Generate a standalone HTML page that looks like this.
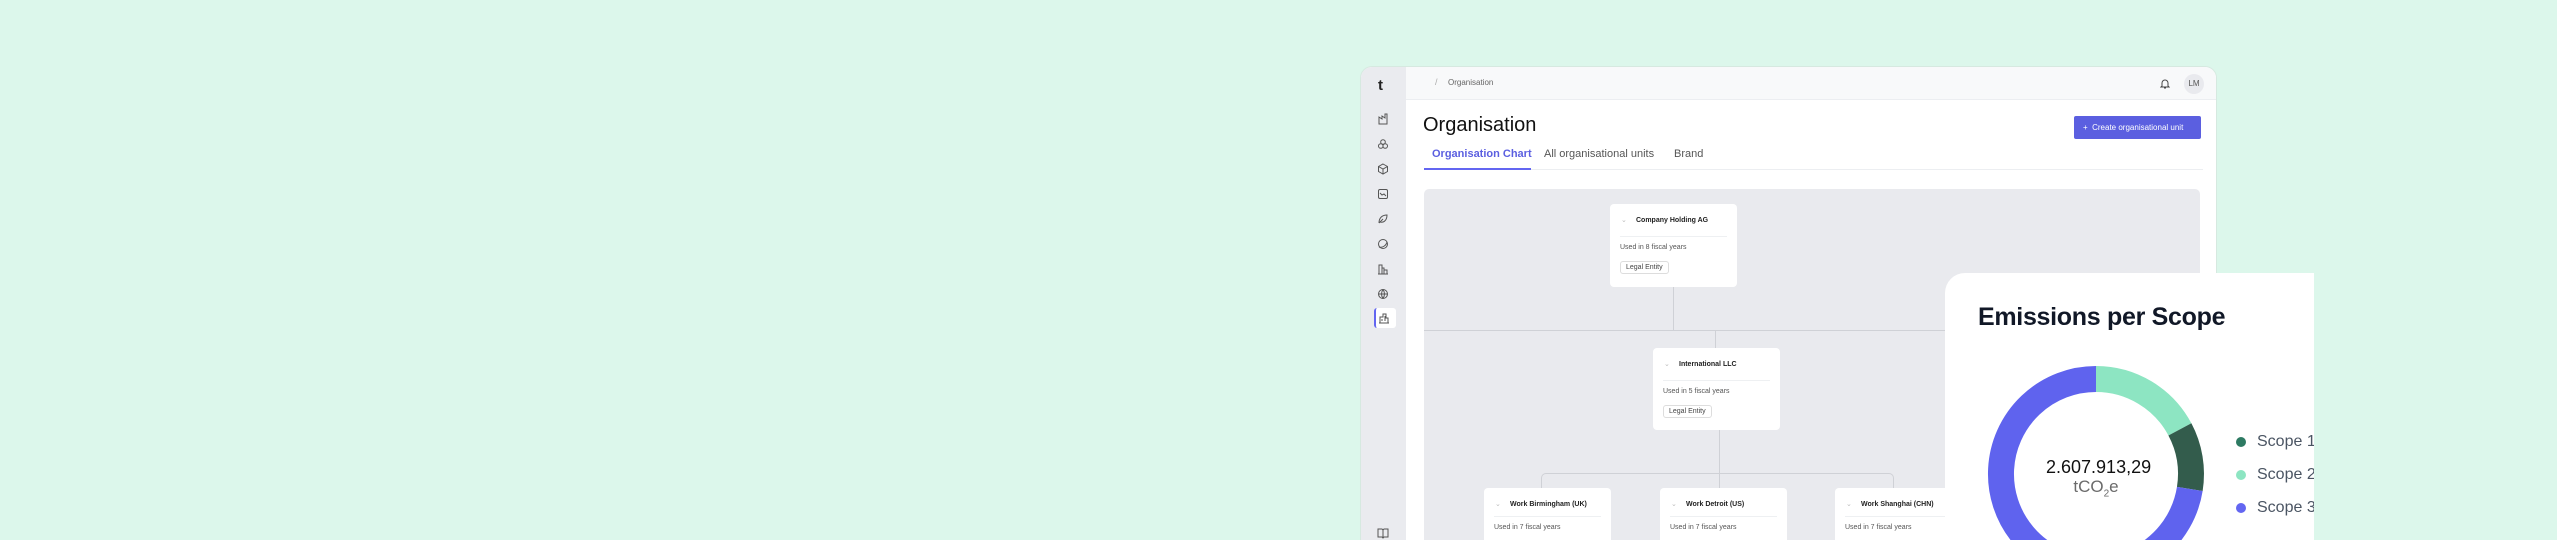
<!DOCTYPE html>
<html style="width:2557px;height:540px;overflow:hidden"><head><meta charset="utf-8"><style>
*{margin:0;padding:0;box-sizing:border-box}
body{width:2557px;height:540px;overflow:hidden;background:#dcf7eb;font-family:"Liberation Sans",sans-serif;position:relative}
.a{position:absolute}
.win{left:1360px;top:66px;width:857px;height:474px;background:#fff;border-radius:12px 12px 0 0;overflow:hidden;border:1px solid #d6e9e0;border-bottom:none}
.side{left:0;top:0;width:45px;height:100%;background:#eaebef}
.hdr{left:45px;top:0;right:0;height:33px;background:#f8f9fa;border-bottom:1px solid #eceef1}
.card{background:#fff;border-radius:4px;width:127px}
.card .t{position:absolute;left:26px;top:13px;font-size:7px;font-weight:bold;color:#222}
.card .c{position:absolute;left:11px;top:12px;font-size:7px;color:#bbb}
.card .d{position:absolute;left:10px;right:10px;top:32px;height:1px;background:#eef0f2}
.card .u{position:absolute;left:10px;top:40px;font-size:7px;color:#555}
.card .b{position:absolute;left:10px;top:57px;border:1px solid #ddd;border-radius:3px;font-size:7px;color:#444;padding:2px 5px}
.ln{background:#cfd1d6}
svg.ic{position:absolute;left:16px;width:12px;height:12px;fill:none;stroke:#555;stroke-width:1}
</style></head><body>
<div class="a win">
 <div class="a side">
  <div class="a" style="left:17px;top:10px;font-size:15px;font-weight:bold;color:#222">t</div>
  <svg class="ic" style="top:46px" viewBox="0 0 12 12"><path d="M2 11V4l3 2V3l3 2V1h2v10z"/></svg>
  <svg class="ic" style="top:71px" viewBox="0 0 12 12"><circle cx="6" cy="4" r="2.3"/><circle cx="3.8" cy="8" r="2.3"/><circle cx="8.2" cy="8" r="2.3"/></svg>
  <svg class="ic" style="top:96px" viewBox="0 0 12 12"><path d="M6 1l4.5 2.5v5L6 11 1.5 8.5v-5zM1.5 3.5L6 6l4.5-2.5M6 6v5"/></svg>
  <svg class="ic" style="top:121px" viewBox="0 0 12 12"><rect x="1.5" y="1.5" width="9" height="9" rx="1.5"/><path d="M3 5l2 2 2-1 2 2"/></svg>
  <svg class="ic" style="top:146px" viewBox="0 0 12 12"><path d="M2 10C2 5 5 2 10 2c0 5-3 8-7 7M2 10l4-4"/></svg>
  <svg class="ic" style="top:171px" viewBox="0 0 12 12"><circle cx="6" cy="6" r="4.5"/><path d="M2 9c3 1 7-1 8-5"/></svg>
  <svg class="ic" style="top:196px" viewBox="0 0 12 12"><path d="M2 11V2h3v9M5 5h2v6M7 7h3v4M1 11h10"/></svg>
  <svg class="ic" style="top:221px" viewBox="0 0 12 12"><circle cx="6" cy="6" r="4.5"/><path d="M1.5 6h9M6 1.5c-2 3-2 6 0 9M6 1.5c2 3 2 6 0 9"/></svg>
  <div class="a" style="left:13px;top:241px;width:22px;height:20px;background:#fff;border-radius:3px;border-left:2px solid #6366f1"></div>
  <svg class="ic" style="top:245px;left:17px" viewBox="0 0 12 12"><path d="M2 11V5h3V2h3v4h2v5M1 11h10M4 7v2M7 4v5"/></svg>
  <svg class="ic" style="top:460px" viewBox="0 0 12 12"><path d="M1 2h4l1 1 1-1h4v8H7l-1 1-1-1H1zM6 3v8"/></svg>
 </div>
 <div class="a hdr">
  <div class="a" style="left:29px;top:10px;font-size:9px;color:#aaa">/</div>
  <div class="a" style="left:42px;top:11px;font-size:8px;color:#666">Organisation</div>
  <svg class="a" style="left:754px;top:11px;width:10px;height:11px" viewBox="0 0 10 11" fill="none" stroke="#444" stroke-width="1"><path d="M2 8V5a3 3 0 016 0v3l1 1H1zM4 10h2"/></svg>
  <div class="a" style="left:778px;top:7px;width:20px;height:20px;border-radius:50%;background:#e9eaee;font-size:8px;color:#555;text-align:center;line-height:20px">LM</div>
 </div>
 <div class="a" style="left:62px;top:47px;font-size:20px;color:#111">Organisation</div>
 <div class="a" style="left:713px;top:49px;width:127px;height:23px;background:#5b5fe0;border-radius:2px;color:#fff;font-size:8px;line-height:23px;padding-left:9px">+&nbsp;&nbsp;Create organisational unit</div>
 <div class="a" style="left:71px;top:81px;font-size:11px;color:#5b5fe0;font-weight:bold">Organisation Chart</div>
 <div class="a" style="left:183px;top:81px;font-size:11px;color:#555">All organisational units</div>
 <div class="a" style="left:313px;top:81px;font-size:11px;color:#555">Brand</div>
 <div class="a" style="left:63px;top:102px;width:779px;height:1px;background:#eceef1"></div>
 <div class="a" style="left:63px;top:101px;width:107px;height:2px;background:#6366f1"></div>
 <div class="a" style="left:63px;top:122px;width:776px;height:352px;background:#e9eaee;border-radius:5px 5px 0 0;overflow:hidden">
  <div class="a ln" style="left:249px;top:98px;width:1px;height:43px"></div>
  <div class="a ln" style="left:0;top:141px;width:776px;height:1px"></div>
  <div class="a ln" style="left:291px;top:141px;width:1px;height:18px"></div>
  <div class="a ln" style="left:295px;top:241px;width:1px;height:58px"></div>
  <div class="a" style="left:117px;top:284px;width:353px;height:15px;border:1px solid #cfd1d6;border-bottom:none;border-radius:5px 5px 0 0"></div>
  <div class="a card" style="left:186px;top:15px;height:83px"><span class="c">⌄</span><span class="t">Company Holding AG</span><div class="d"></div><span class="u">Used in 8 fiscal years</span><span class="b">Legal Entity</span></div>
  <div class="a card" style="left:229px;top:159px;height:82px"><span class="c">⌄</span><span class="t">International LLC</span><div class="d"></div><span class="u">Used in 5 fiscal years</span><span class="b">Legal Entity</span></div>
  <div class="a card" style="left:60px;top:299px;height:53px;border-radius:4px 4px 0 0"><span class="c">⌄</span><span class="t">Work Birmingham (UK)</span><div class="d" style="top:28px"></div><span class="u" style="top:36px">Used in 7 fiscal years</span></div>
  <div class="a card" style="left:236px;top:299px;height:53px;border-radius:4px 4px 0 0"><span class="c">⌄</span><span class="t">Work Detroit (US)</span><div class="d" style="top:28px"></div><span class="u" style="top:36px">Used in 7 fiscal years</span></div>
  <div class="a card" style="left:411px;top:299px;height:53px;border-radius:4px 4px 0 0"><span class="c">⌄</span><span class="t">Work Shanghai (CHN)</span><div class="d" style="top:28px"></div><span class="u" style="top:36px">Used in 7 fiscal years</span></div>
 </div>
</div>
<div class="a" style="left:1945px;top:273px;width:369px;height:267px;background:#fff;border-radius:20px 0 0 0;overflow:hidden">
 <div class="a" style="left:33px;top:30px;font-size:25px;font-weight:bold;color:#111827;letter-spacing:-0.3px">Emissions per Scope</div>
 <svg class="a" style="left:0;top:0" width="369" height="267" fill="none" stroke-width="26">
  <path d="M151 106A95 95 0 0 1 234.9 156.4" stroke="#8de5c2"/>
  <path d="M234.9 156.4A95 95 0 0 1 244.8 215.9" stroke="#335c4c"/>
  <path d="M244.8 215.9A95 95 0 1 1 151 106" stroke="#5f63ee"/>
 </svg>
 <div class="a" style="left:101px;top:184px;width:100px;text-align:center;font-size:18px;color:#111">2.607.913,29</div>
 <div class="a" style="left:101px;top:204px;width:100px;text-align:center;font-size:17px;color:#6b6b6b">tCO<sub style="font-size:10px">2</sub>e</div>
 <div class="a" style="left:291px;top:164px;width:10px;height:10px;border-radius:50%;background:#2d7a62"></div>
 <div class="a" style="left:291px;top:197px;width:10px;height:10px;border-radius:50%;background:#8de5c2"></div>
 <div class="a" style="left:291px;top:230px;width:10px;height:10px;border-radius:50%;background:#6366f1"></div>
 <div class="a" style="left:312px;top:160px;font-size:16px;color:#4b5563;white-space:nowrap">Scope 1</div>
 <div class="a" style="left:312px;top:193px;font-size:16px;color:#4b5563;white-space:nowrap">Scope 2</div>
 <div class="a" style="left:312px;top:226px;font-size:16px;color:#4b5563;white-space:nowrap">Scope 3</div>
</div>
</body></html>
